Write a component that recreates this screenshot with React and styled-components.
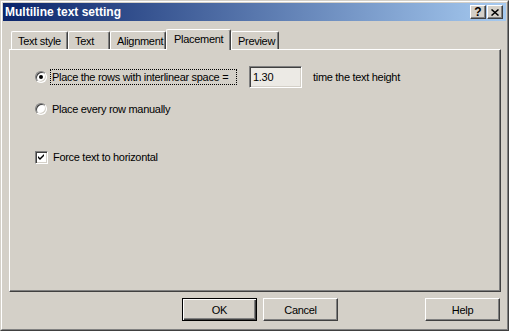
import React from 'react'
import styled, { createGlobalStyle } from 'styled-components'

const GlobalStyle = createGlobalStyle`
  html, body {
    margin: 0;
    padding: 0;
    background: #d4d0c8;
  }
  body {
    font-family: Tahoma, 'Liberation Sans', Arial, sans-serif;
    font-size: 11px;
    letter-spacing: -0.3px;
    color: #000;
  }
`

const Window = styled.div`
  width: 509px;
  height: 331px;
  box-sizing: border-box;
  background: #d4d0c8;
  border: 1px solid;
  border-color: #d4d0c8 #404040 #404040 #d4d0c8;
`
const Frame = styled.div`
  height: 100%;
  box-sizing: border-box;
  border: 1px solid;
  border-color: #fff #808080 #808080 #fff;
  padding: 1px;
  display: flex;
  flex-direction: column;
`
const TitleBar = styled.div`
  height: 18px;
  flex: none;
  display: flex;
  align-items: center;
  justify-content: space-between;
  padding: 0 3px 0 2px;
  background: linear-gradient(to right, #0a246a, #a6caf0);
`
const Title = styled.span`
  color: #fff;
  font-weight: bold;
  font-size: 12px;
  letter-spacing: 0;
`
const TitleButtons = styled.div`
  display: flex;
  gap: 1px;
`
const TitleButton = styled.div`
  width: 16px;
  height: 14px;
  box-sizing: border-box;
  background: #d4d0c8;
  border: 1px solid;
  border-color: #fff #404040 #404040 #fff;
  box-shadow: inset -1px -1px 0 #808080;
  display: flex;
  align-items: center;
  justify-content: center;
  font-weight: bold;
  font-size: 12px;
  letter-spacing: 0;
  line-height: 1;
`
const Content = styled.div`
  flex: 1;
  display: flex;
  flex-direction: column;
  padding: 8px 5px 7px 6px;
`
const TabStrip = styled.div`
  height: 20px;
  display: flex;
  align-items: flex-end;
  padding-left: 2px;
  position: relative;
  z-index: 1;
`
const Tab = styled.div`
  width: ${p => p.$w}px;
  height: ${p => (p.$active ? 21 : 18)}px;
  margin-bottom: ${p => (p.$active ? -1 : 0)}px;
  box-sizing: border-box;
  background: #d4d0c8;
  border-top: 1px solid #fff;
  border-left: 1px solid #fff;
  border-right: 1px solid #404040;
  box-shadow: inset -1px 0 0 #808080;
  border-radius: 2px 2px 0 0;
  padding: 3px 0 0 ${p => (p.$active ? 7 : 6)}px;
  white-space: nowrap;
`
const Panel = styled.div`
  height: 243px;
  box-sizing: border-box;
  border: 1px solid;
  border-color: #fff #404040 #404040 #fff;
  box-shadow: inset -1px -1px 0 #808080;
  padding: 16px 0 0 25px;
  display: flex;
  flex-direction: column;
`
const Row = styled.div`
  display: flex;
  align-items: center;
  height: ${p => p.$h}px;
  margin-top: ${p => p.$top}px;
`
const Radio = styled.span`
  width: 12px;
  height: 12px;
  flex: none;
  box-sizing: border-box;
  border-radius: 50%;
  border: 1px solid;
  border-color: #808080 #fff #fff #808080;
  background: #fff;
  box-shadow: inset 1px 1px 0 #404040, inset -1px -1px 0 #d4d0c8;
  display: flex;
  align-items: center;
  justify-content: center;
  &::after {
    content: '';
    display: ${p => (p.$checked ? 'block' : 'none')};
    width: 4px;
    height: 4px;
    border-radius: 50%;
    background: #000;
  }
`
const Label = styled.span`
  margin-left: ${p => p.$gap}px;
  white-space: nowrap;
`
const FocusLabel = styled.span`
  width: 187px;
  flex: none;
  box-sizing: border-box;
  margin-left: 3px;
  border: 1px dotted #000;
  padding: 1px 1px;
  white-space: nowrap;
`
const Input = styled.div`
  width: 53px;
  height: 22px;
  box-sizing: border-box;
  margin-left: 12px;
  border: 1px solid;
  border-color: #808080 #fff #fff #808080;
  box-shadow: inset 1px 1px 0 #404040, inset -1px -1px 0 #d4d0c8;
  background: #eceae5;
  padding: 4px 0 0 3px;
`
const Suffix = styled.span`
  margin-left: 11px;
  white-space: nowrap;
`
const CheckBox = styled.span`
  width: 13px;
  height: 13px;
  flex: none;
  box-sizing: border-box;
  border: 1px solid;
  border-color: #808080 #fff #fff #808080;
  box-shadow: inset 1px 1px 0 #404040, inset -1px -1px 0 #d4d0c8;
  background: #fff;
  display: flex;
  align-items: center;
  justify-content: center;
`
const ButtonRow = styled.div`
  display: flex;
  margin-top: 6px;
  padding-left: 173px;
`
const Button = styled.div`
  width: 75px;
  height: 23px;
  box-sizing: border-box;
  margin-left: ${p => p.$ml || 0}px;
  border: 1px solid;
  border-color: ${p => (p.$default ? '#000' : '#fff #404040 #404040 #fff')};
  box-shadow: ${p =>
    p.$default
      ? 'inset 1px 1px 0 #fff, inset -1px -1px 0 #404040, inset -2px -2px 0 #808080'
      : 'inset -1px -1px 0 #808080'};
  display: flex;
  align-items: center;
  justify-content: center;
`

export default function App () {
  return (
    <>
      <GlobalStyle />
      <Window>
        <Frame>
          <TitleBar>
            <Title>Multiline text setting</Title>
            <TitleButtons>
              <TitleButton>?</TitleButton>
              <TitleButton>
                <svg width='8' height='7' viewBox='0 0 8 7'>
                  <path d='M0.5 0.5 L7.5 6.5 M7.5 0.5 L0.5 6.5' stroke='#000' strokeWidth='1.5' />
                </svg>
              </TitleButton>
            </TitleButtons>
          </TitleBar>
          <Content>
            <TabStrip>
              <Tab $w={57}>Text style</Tab>
              <Tab $w={42}>Text</Tab>
              <Tab $w={56}>Alignment</Tab>
              <Tab $w={65} $active>Placement</Tab>
              <Tab $w={48}>Preview</Tab>
            </TabStrip>
            <Panel>
              <Row $h={22} $top={0}>
                <Radio $checked />
                <FocusLabel>Place the rows with interlinear space =</FocusLabel>
                <Input>1.30</Input>
                <Suffix>time the text height</Suffix>
              </Row>
              <Row $h={16} $top={13}>
                <Radio />
                <Label $gap={5}>Place every row manually</Label>
              </Row>
              <Row $h={16} $top={32}>
                <CheckBox>
                  <svg width='7' height='7' viewBox='0 0 7 7'>
                    <path d='M0 2 L2 4 L6 0 L6 2 L2 6 L0 4 Z' fill='#000' />
                  </svg>
                </CheckBox>
                <Label $gap={5}>Force text to horizontal</Label>
              </Row>
            </Panel>
            <ButtonRow>
              <Button $default>OK</Button>
              <Button $ml={6}>Cancel</Button>
              <Button $ml={87}>Help</Button>
            </ButtonRow>
          </Content>
        </Frame>
      </Window>
    </>
  )
}
